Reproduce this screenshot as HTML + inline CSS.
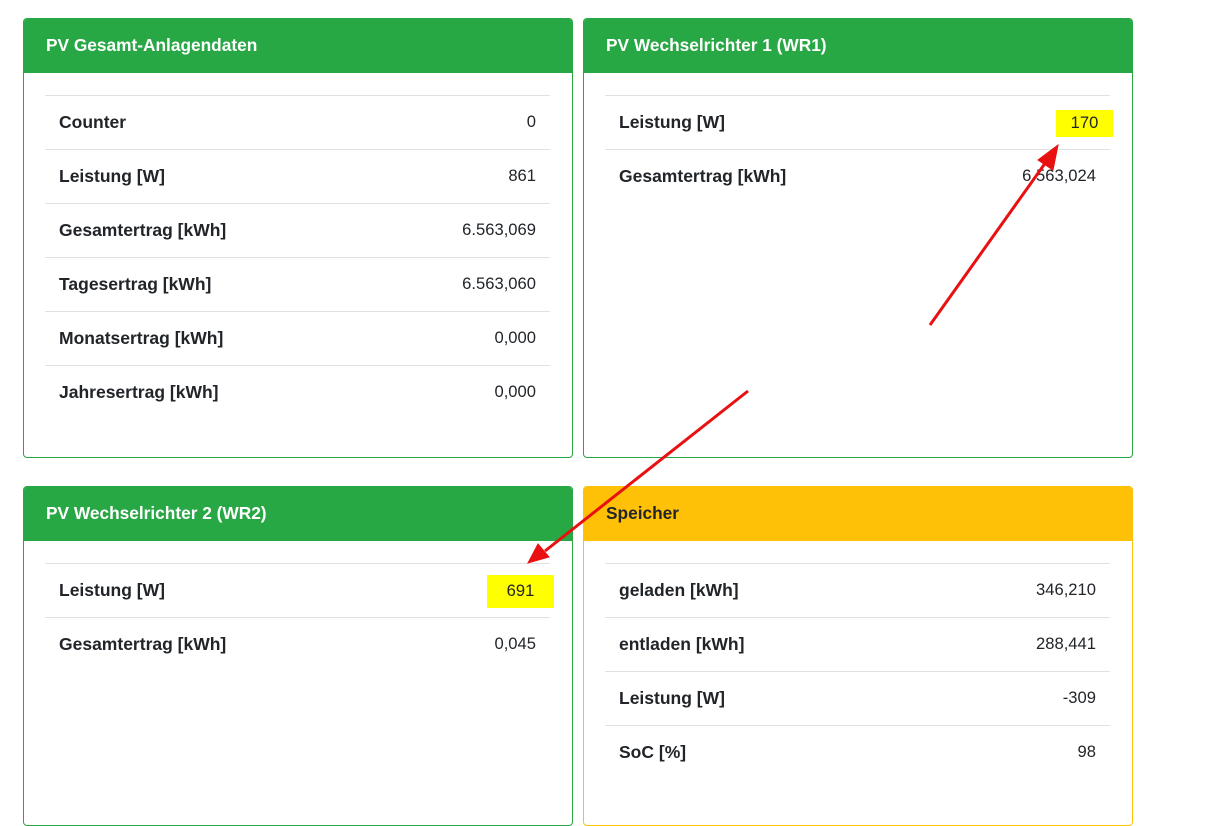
<!DOCTYPE html>
<html><head><meta charset="utf-8"><style>
*{box-sizing:border-box;margin:0;padding:0}
body{width:1205px;height:817px;background:#fff;font-family:"Liberation Sans",sans-serif;color:#212529;position:relative;overflow:hidden}
.card{position:absolute;width:550px;border:1px solid #28a745;border-radius:4px;overflow:hidden;background:#fff}
.card.y{border-color:#ffc107}
.hd{height:54px;background:#28a745;color:#fff;font-weight:bold;font-size:17.3px;line-height:53px;padding-left:22px}
.y .hd{background:#ffc107;color:#212529}
table{position:absolute;left:21px;top:76px;width:505px;border-collapse:collapse;font-size:16.6px}
td{height:54px;border-top:1px solid #dee2e6;padding:0 14px 1px;vertical-align:middle}
td:first-child{font-weight:bold;font-size:17.5px}
td:last-child{text-align:right}
.hl{position:absolute;background:#ffff00;font-size:16.6px;text-align:center}
</style></head><body>
<div class="card" style="left:23px;top:18px;height:440px"><div class="hd">PV Gesamt-Anlagendaten</div>
<table><tr><td>Counter</td><td>0</td></tr><tr><td>Leistung [W]</td><td>861</td></tr><tr><td>Gesamtertrag [kWh]</td><td>6.563,069</td></tr><tr><td>Tagesertrag [kWh]</td><td>6.563,060</td></tr><tr><td>Monatsertrag [kWh]</td><td>0,000</td></tr><tr><td>Jahresertrag [kWh]</td><td>0,000</td></tr></table></div>
<div class="card" style="left:583px;top:18px;height:440px"><div class="hd">PV Wechselrichter 1 (WR1)</div>
<table><tr><td>Leistung [W]</td><td>&nbsp;</td></tr><tr><td>Gesamtertrag [kWh]</td><td>6.563,024</td></tr></table></div>
<div class="card" style="left:23px;top:486px;height:340px"><div class="hd">PV Wechselrichter 2 (WR2)</div>
<table><tr><td>Leistung [W]</td><td>&nbsp;</td></tr><tr><td>Gesamtertrag [kWh]</td><td>0,045</td></tr></table></div>
<div class="card y" style="left:583px;top:486px;height:340px"><div class="hd">Speicher</div>
<table><tr><td>geladen [kWh]</td><td>346,210</td></tr><tr><td>entladen [kWh]</td><td>288,441</td></tr><tr><td>Leistung [W]</td><td>-309</td></tr><tr><td>SoC [%]</td><td>98</td></tr></table></div>
<div class="hl" style="left:1056px;top:110px;width:57px;height:27px;line-height:26px">170</div>
<div class="hl" style="left:487px;top:575px;width:67px;height:33px;line-height:32px">691</div>
<svg width="1205" height="817" style="position:absolute;left:0;top:0">
<g stroke="#e81010" stroke-width="3" fill="#e81010">
<line x1="930" y1="325" x2="1046" y2="162"/>
<polygon points="1058,145 1038,160 1053,170" stroke-width="1"/>
<line x1="748" y1="391" x2="545" y2="551"/>
<polygon points="528,563 538,544 549,557" stroke-width="1"/>
</g></svg>
</body></html>
